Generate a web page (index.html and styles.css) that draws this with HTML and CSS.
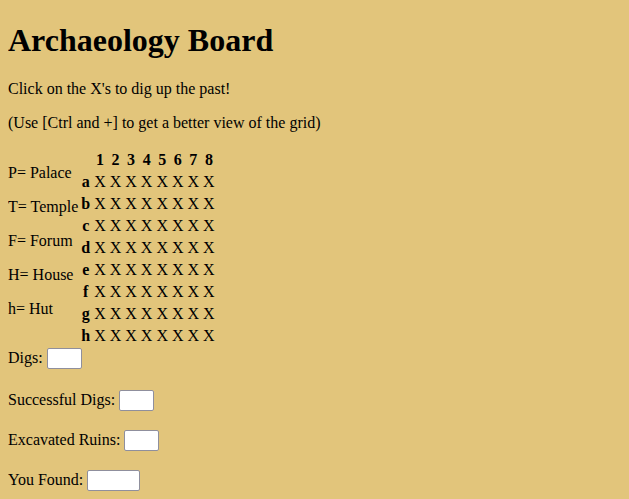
FILE: index.html
```html
<!DOCTYPE html>
<html>
<head>
<meta charset="utf-8">
<title>Archaeology Board</title>
<link rel="stylesheet" href="styles.css">
</head>
<body>
<h1>Archaeology Board</h1>
<p>Click on the X's to dig up the past!</p>
<p>(Use [Ctrl and +] to get a better view of the grid)</p>
<div class="legend">
<p>P= Palace</p>
<p>T= Temple</p>
<p>F= Forum</p>
<p>H= House</p>
<p>h= Hut</p>
</div>
<table class="grid">
<tr><th></th><th>1</th><th>2</th><th>3</th><th>4</th><th>5</th><th>6</th><th>7</th><th>8</th></tr>
<tr><th>a</th><td>X</td><td>X</td><td>X</td><td>X</td><td>X</td><td>X</td><td>X</td><td>X</td></tr>
<tr><th>b</th><td>X</td><td>X</td><td>X</td><td>X</td><td>X</td><td>X</td><td>X</td><td>X</td></tr>
<tr><th>c</th><td>X</td><td>X</td><td>X</td><td>X</td><td>X</td><td>X</td><td>X</td><td>X</td></tr>
<tr><th>d</th><td>X</td><td>X</td><td>X</td><td>X</td><td>X</td><td>X</td><td>X</td><td>X</td></tr>
<tr><th>e</th><td>X</td><td>X</td><td>X</td><td>X</td><td>X</td><td>X</td><td>X</td><td>X</td></tr>
<tr><th>f</th><td>X</td><td>X</td><td>X</td><td>X</td><td>X</td><td>X</td><td>X</td><td>X</td></tr>
<tr><th>g</th><td>X</td><td>X</td><td>X</td><td>X</td><td>X</td><td>X</td><td>X</td><td>X</td></tr>
<tr><th>h</th><td>X</td><td>X</td><td>X</td><td>X</td><td>X</td><td>X</td><td>X</td><td>X</td></tr>
</table>
<div class="stat first">Digs: <input class="box" type="text"></div>
<p class="stat">Successful Digs: <input class="box" type="text"></p>
<p class="stat">Excavated Ruins: <input class="box" type="text"></p>
<p class="stat">You Found: <input class="box wide" type="text"></p>
</body>
</html>
```
FILE: styles.css
```css
body {
  background: #e2c57b;
  font-family: "Liberation Serif", "Times New Roman", serif;
  font-size: 16px;
  color: #000;
  margin: 8px;
}
h1 {
  font-size: 32px;
  margin: 14px 0 21px;
}
p {
  margin: 16px 0;
}
.legend {
  float: left;
}
.grid {
  border-spacing: 2px;
}
.grid th, .grid td {
  padding: 1px;
  text-align: center;
}
.stat {
  clear: both;
}
.stat.first {
  padding-bottom: 2px;
}
.box {
  box-sizing: border-box;
  width: 35px;
  height: 21px;
  border: 1px solid #8f8f9d;
  border-radius: 2px;
  background: #fff;
  padding: 1px 2px;
  font-size: 13px;
  vertical-align: baseline;
  margin: 0 0 3px;
}
.box.wide {
  width: 53px;
}
```
